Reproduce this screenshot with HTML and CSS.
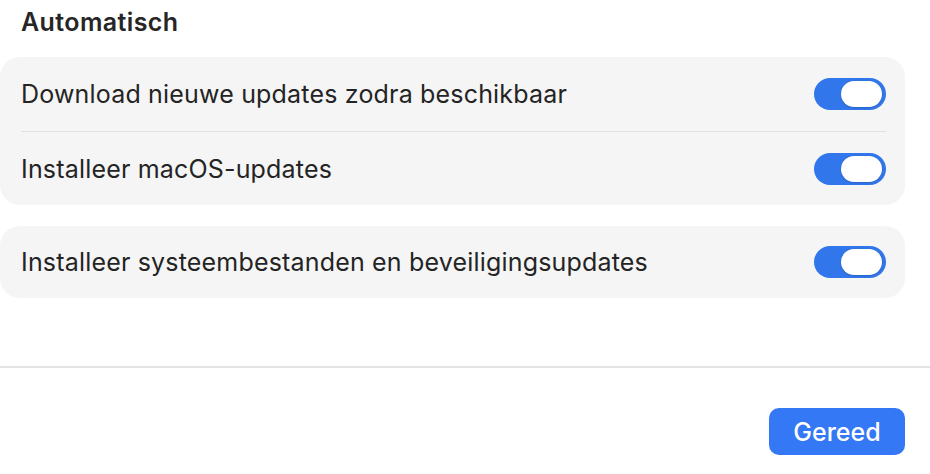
FILE: index.html
```html
<!DOCTYPE html>
<html lang="nl">
<head>
<meta charset="utf-8">
<link rel="stylesheet" href="styles.css">
</head>
<body>
<div class="page">
  <h2 class="title">Automatisch</h2>
  <div class="card">
    <div class="row">
      <span class="label">Download nieuwe updates zodra beschikbaar</span>
      <span class="toggle"><span class="knob"></span></span>
    </div>
    <div class="divider"></div>
    <div class="row">
      <span class="label">Installeer macOS-updates</span>
      <span class="toggle"><span class="knob"></span></span>
    </div>
  </div>
  <div class="card card-single">
    <div class="row">
      <span class="label">Installeer systeembestanden en beveiligingsupdates</span>
      <span class="toggle"><span class="knob"></span></span>
    </div>
  </div>
</div>
<div class="footer">
  <button class="done">Gereed</button>
</div>
</body>
</html>
```

FILE: styles.css
```css
html, body {
  margin: 0;
  padding: 0;
  background: #ffffff;
  width: 930px;
  height: 474px;
  overflow: hidden;
  font-family: Inter, "Liberation Sans", sans-serif;
  color: #242424;
}
.page {
  padding: 0 25px 0 0;
  height: 366px;
  box-sizing: border-box;
}
.title {
  margin: 0;
  padding: 7px 0 0 21px;
  height: 57px;
  box-sizing: border-box;
  font-size: 25px;
  font-weight: 600;
  letter-spacing: 0.4px;
  line-height: 30px;
  color: #262626;
}
.card {
  background: #f5f5f5;
  border-radius: 20px;
  display: flex;
  flex-direction: column;
}
.card-single {
  margin-top: 21px;
}
.row {
  height: 74px;
  display: flex;
  align-items: center;
  justify-content: space-between;
  padding: 0 19px 0 21px;
}
.card .row:last-child {
  height: 73px;
}
.card-single .row:last-child {
  height: 72px;
}
.label {
  font-size: 25px;
  letter-spacing: 0.18px;
}
.divider {
  height: 1px;
  background: #e2e2e2;
  margin: 0 19px 0 21px;
}
.toggle {
  width: 72px;
  height: 32px;
  border-radius: 16px;
  background: #3176ea;
  display: flex;
  align-items: center;
  justify-content: flex-end;
  padding-right: 4px;
  box-sizing: border-box;
}
.knob {
  width: 41px;
  height: 26px;
  border-radius: 13px;
  background: #ffffff;
  box-shadow: 0 0.5px 1.5px rgba(0,0,0,0.25);
}
.footer {
  border-top: 2px solid #e4e4e4;
  height: 108px;
  box-sizing: border-box;
  display: flex;
  justify-content: flex-end;
  align-items: flex-start;
  padding: 40px 25px 0 0;
}
.done {
  width: 136px;
  height: 47px;
  border: none;
  border-radius: 10px;
  background: #3478f6;
  color: #ffffff;
  font-family: Inter, "Liberation Sans", sans-serif;
  font-size: 25px;
  font-weight: 500;
  padding: 0;
}
```
